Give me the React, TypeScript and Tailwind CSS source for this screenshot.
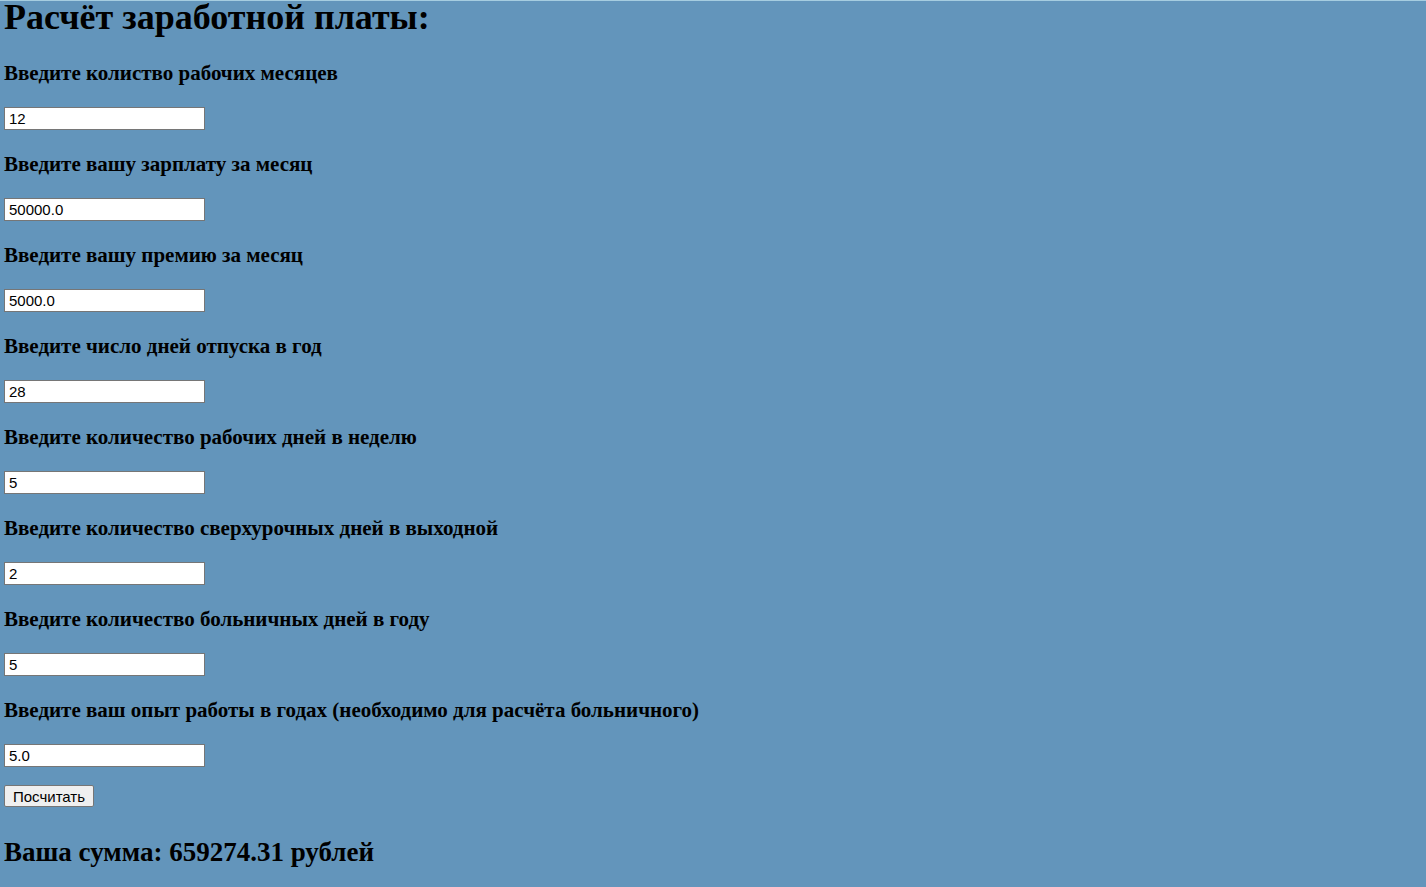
import React from 'react';

const fields = [
  { label: 'Введите колиство рабочих месяцев', value: '12' },
  { label: 'Введите вашу зарплату за месяц', value: '50000.0' },
  { label: 'Введите вашу премию за месяц', value: '5000.0' },
  { label: 'Введите число дней отпуска в год', value: '28' },
  { label: 'Введите количество рабочих дней в неделю', value: '5' },
  { label: 'Введите количество сверхурочных дней в выходной', value: '2' },
  { label: 'Введите количество больничных дней в году', value: '5' },
  { label: 'Введите ваш опыт работы в годах (необходимо для расчёта больничного)', value: '5.0' },
];

const sans = { fontFamily: '"Liberation Sans", Arial, sans-serif' };

const App: React.FC = () => {
  return (
    <div
      className="h-[887px] overflow-hidden bg-[#6395bb] border-t border-[#a6cde0] px-[4px] text-black"
      style={{ fontFamily: '"Liberation Serif", "Times New Roman", serif' }}
    >
      <h1 className="text-[36px] font-bold leading-[36px] -mt-[2px]">Расчёт заработной платы:</h1>

      <form onSubmit={(e) => e.preventDefault()}>
        {fields.map((f, i) => (
          <div key={i}>
            <h4 className={`text-[21px] font-bold leading-[21px] mb-[23px] ${i === 0 ? 'mt-[28px]' : 'mt-[24px]'}`}>
              {f.label}
            </h4>
            <input
              type="text"
              defaultValue={f.value}
              className="block w-[201px] h-[23px] bg-white border border-[#767676] px-[4px] text-[15px] outline-none"
              style={sans}
            />
          </div>
        ))}
        <button
          type="submit"
          className="mt-[18px] h-[22px] px-[8px] bg-[#efefef] border border-[#767676] rounded-[2px] text-[15px] leading-none"
          style={sans}
        >
          Посчитать
        </button>
      </form>

      <h2 className="text-[27px] font-bold leading-[27px] mt-[30px]">Ваша сумма: 659274.31 рублей</h2>
    </div>
  );
};

export default App;
